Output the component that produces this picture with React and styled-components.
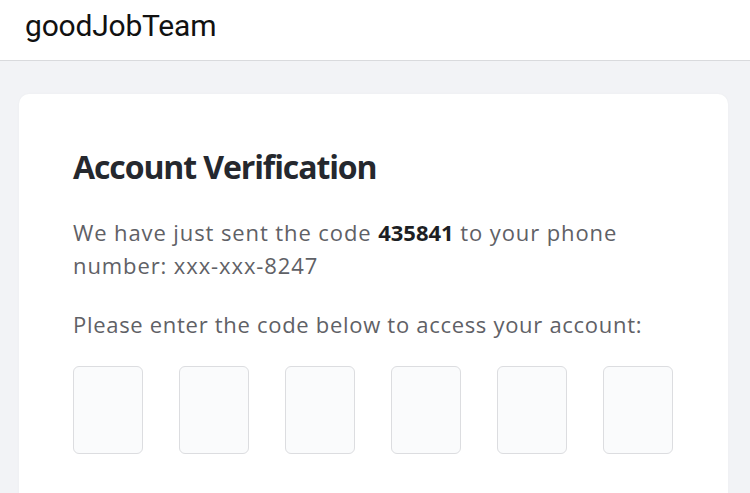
import React from 'react';
import styled, { createGlobalStyle } from 'styled-components';

const GlobalStyle = createGlobalStyle`
  html, body {
    margin: 0;
    padding: 0;
    background: #f2f3f6;
    height: 100%;
    overflow: hidden;
  }
  #root {
    height: 100%;
  }
`

const Page = styled.div`
  display: flex;
  flex-direction: column;
  height: 100%;
`

const Header = styled.header`
  flex-shrink: 0;
  height: 61px;
  background: #ffffff;
  border-bottom: 1px solid #d9dadd;
  display: flex;
  align-items: flex-start;
  padding-left: 25px;
  box-sizing: border-box;

  > h1 {
    margin: 0;
    margin-top: 8px;
    font-family: Roboto, "Liberation Sans", sans-serif;
    font-weight: 400;
    font-size: 30px;
    color: #111;
    letter-spacing: -0.2px;
  }
`

const Main = styled.main`
  flex: 1;
  min-height: 0;
  overflow: hidden;
  padding: 33px 22px 0 19px;
`

const Card = styled.section`
  background: #ffffff;
  border-radius: 10px;
  min-height: 420px;
  box-sizing: border-box;
  padding: 53px 54px 0 54px;
  box-shadow: 0 0 3px rgba(0, 0, 0, 0.03);
`

const Title = styled.h2`
  margin: 0;
  font-family: "Open Sans", "Noto Sans", sans-serif;
  font-weight: 700;
  font-size: 32px;
  line-height: 40px;
  color: #25282e;
  letter-spacing: -1.1px;
`

const Text = styled.p`
  margin: ${props => props.top}px 0 0 0;
  font-family: "Open Sans", "Noto Sans", sans-serif;
  font-size: 22px;
  line-height: 33px;
  color: #5f6166;
  letter-spacing: ${props => props.spacing || 0}px;
  max-width: 610px;

  > b {
    color: #1d1f24;
    font-weight: 700;
    letter-spacing: 0;
  }
`

const CodeRow = styled.div`
  display: flex;
  gap: 36px;
  margin-top: 25px;
`

const CodeBox = styled.input`
  width: 70px;
  height: 88px;
  box-sizing: border-box;
  border: 1px solid #dcdde0;
  border-radius: 6px;
  background: #fafbfc;
  font-family: "Open Sans", sans-serif;
  font-size: 28px;
  text-align: center;
  outline: none;
`

const App = () => {
  return (
    <Page>
      <GlobalStyle />
      <Header>
        <h1>goodJobTeam</h1>
      </Header>
      <Main>
        <Card>
          <Title>Account Verification</Title>
          <Text top={29} spacing={0.9}>
            We have just sent the code <b>435841</b> to your phone number: xxx-xxx-8247
          </Text>
          <Text top={26} spacing={0.7}>Please enter the code below to access your account:</Text>
          <CodeRow>
            {[0, 1, 2, 3, 4, 5].map(i => (
              <CodeBox key={i} maxLength={1} />
            ))}
          </CodeRow>
        </Card>
      </Main>
    </Page>
  )
}

export default App;
